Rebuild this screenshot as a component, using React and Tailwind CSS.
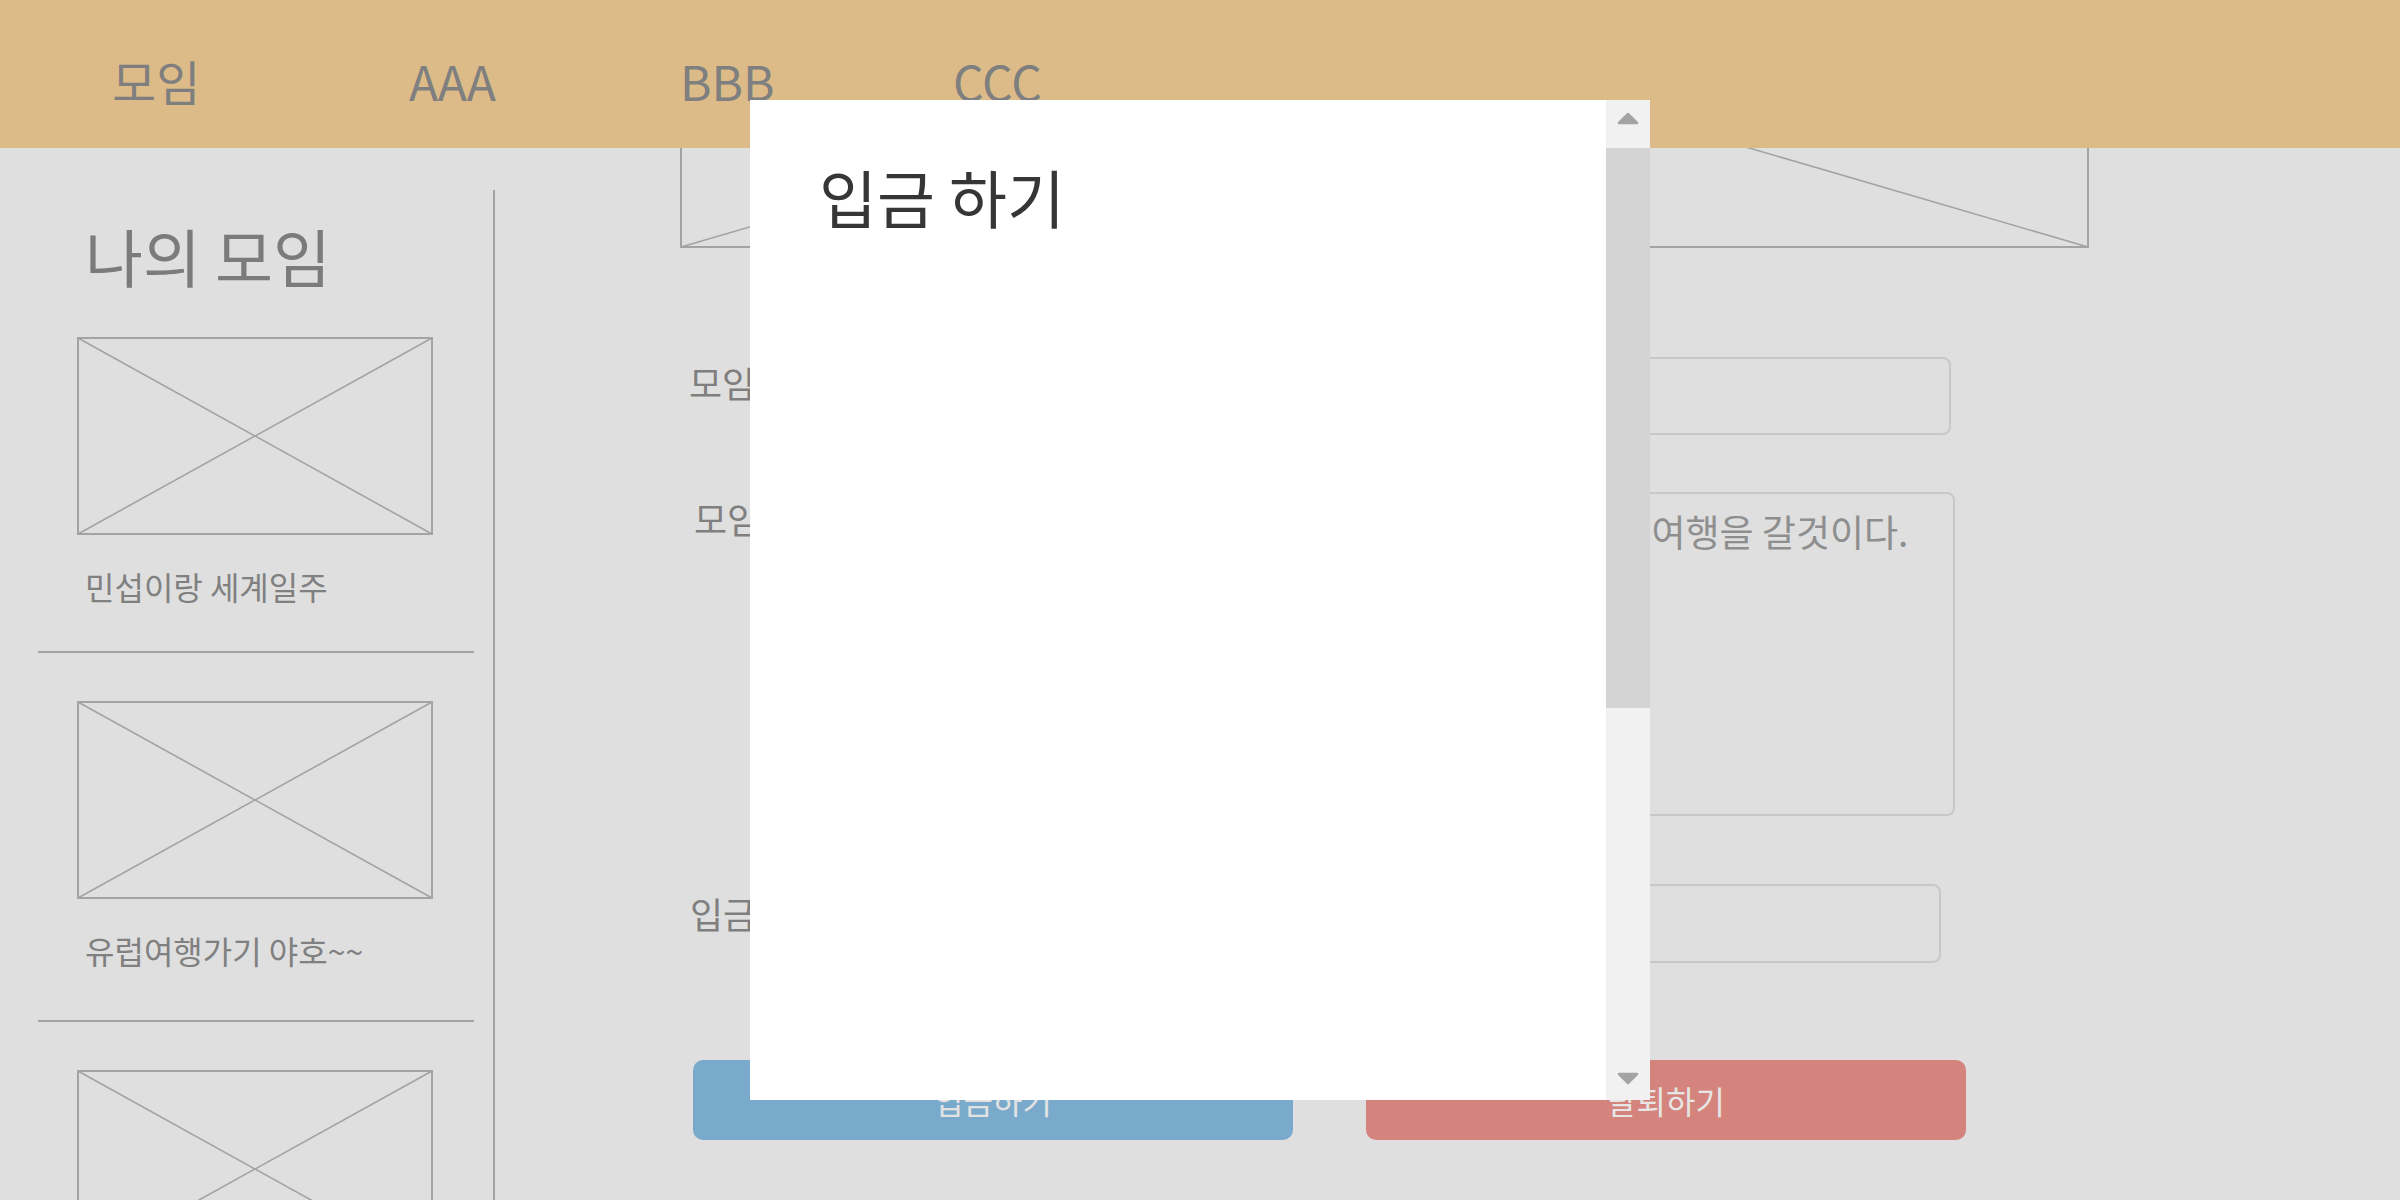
import React from "react";

function Placeholder({ w, h, className = "" }) {
  return (
    <svg
      width={w}
      height={h}
      viewBox={`0 0 ${w} ${h}`}
      className={`block shrink-0 ${className}`}
    >
      <rect x="1" y="1" width={w - 2} height={h - 2} fill="none" stroke="#a3a3a3" strokeWidth="2" />
      <line x1="1" y1="1" x2={w - 1} y2={h - 1} stroke="#a3a3a3" strokeWidth="1.6" />
      <line x1="1" y1={h - 1} x2={w - 1} y2="1" stroke="#a3a3a3" strokeWidth="1.6" />
    </svg>
  );
}

const cards = [
  { title: "민섭이랑 세계일주", gap: "mt-[49px]" },
  { title: "유럽여행가기 야호~~", gap: "mt-[54px]" },
];

function Card({ title, gap }) {
  return (
    <div className="flex flex-col">
      <Placeholder w={356} h={198} className="ml-[39px]" />
      <div className="ml-[47px] mt-[35px] text-[32px] leading-none text-[#808080] whitespace-nowrap">
        {title}
      </div>
      <div className={`${gap} h-[2px] bg-[#a3a3a3]`} />
      <div className="h-[48px]" />
    </div>
  );
}

function Arrow({ down }) {
  return (
    <svg width="22" height="13" viewBox="0 0 22 13">
      {down ? (
        <polygon points="2,2 20,2 11,11" fill="#a3a3a3" stroke="#a3a3a3" strokeWidth="2.5" strokeLinejoin="round" />
      ) : (
        <polygon points="11,2 20,11 2,11" fill="#a3a3a3" stroke="#a3a3a3" strokeWidth="2.5" strokeLinejoin="round" />
      )}
    </svg>
  );
}

export default function App() {
  return (
    <div className="relative w-[2400px] h-[1200px] overflow-hidden bg-[#dfdfdf] font-['Noto_Sans_CJK_KR','Noto_Sans',sans-serif]">
      {/* Header */}
      <header className="h-[148px] bg-[#dcbb88] flex items-center pt-[12px] text-[48px] leading-none text-[#7f7f7f]">
        <div className="ml-[112px] w-[297px]">모임</div>
        <div className="w-[271px]">AAA</div>
        <div className="w-[273px]">BBB</div>
        <div>CCC</div>
      </header>

      {/* Body */}
      <div className="flex h-[1052px]">
        <aside className="w-[495px] shrink-0 mt-[42px] border-r-2 border-[#a3a3a3] pl-[38px] pr-[19px] overflow-hidden">
          <h2 className="ml-[47px] mt-[33px] text-[63px] leading-none text-[#7b7b7b] font-normal whitespace-nowrap">
            나의 모임
          </h2>
          <div className="mt-[51px] flex flex-col">
            {cards.map((c) => (
              <Card key={c.title} title={c.title} gap={c.gap} />
            ))}
            <Placeholder w={356} h={198} className="ml-[39px]" />
          </div>
        </aside>

        <main className="flex-1 overflow-hidden">
          <div className="-mt-[313px] pl-[185px] flex flex-col">
            <Placeholder w={1409} h={413} />

            <div className="mt-[109px] flex items-start">
              <div className="w-[280px] pl-[9px] pt-[7px] text-[36px] leading-none text-[#7f7f7f] whitespace-nowrap">
                모임 이름
              </div>
              <input
                readOnly
                className="w-[991px] h-[78px] border-2 border-[#c8c8c8] rounded-[8px] bg-transparent outline-none px-[20px] text-[36px] text-[#8e8e8e]"
                defaultValue=""
              />
            </div>

            <div className="mt-[57px] flex items-start">
              <div className="w-[280px] pl-[14px] pt-[8px] text-[36px] leading-none text-[#7f7f7f] whitespace-nowrap">
                모임 소개
              </div>
              <textarea
                readOnly
                className="w-[995px] h-[324px] border-2 border-[#c8c8c8] rounded-[8px] bg-transparent outline-none resize-none overflow-hidden pl-[27px] pr-[8px] pt-[19px] text-[37px] leading-none text-[#8e8e8e]"
                defaultValue="우리는 이번 여름방학에 민섭이랑 함께 세계 여행을 갈것이다."
              />
            </div>

            <div className="mt-[68px] flex items-start">
              <div className="w-[280px] pl-[10px] pt-[11px] text-[36px] leading-none text-[#7f7f7f] whitespace-nowrap">
                입금 금액
              </div>
              <input
                readOnly
                className="w-[981px] h-[79px] border-2 border-[#c8c8c8] rounded-[8px] bg-transparent outline-none px-[20px] text-[36px] text-[#8e8e8e]"
                defaultValue=""
              />
            </div>

            <div className="mt-[97px] ml-[13px] flex gap-[73px]">
              <button className="w-[600px] h-[80px] rounded-[10px] bg-[#79aacb] text-[32px] leading-none text-[#e2e2e2]">
                입금하기
              </button>
              <button className="w-[600px] h-[80px] rounded-[10px] bg-[#d4847c] text-[32px] leading-none text-[#e6e6e6]">
                탈퇴하기
              </button>
            </div>
          </div>
        </main>
      </div>

      {/* Modal */}
      <div className="absolute left-[750px] top-[100px] w-[900px] h-[1000px] flex bg-white">
        <div className="flex-1 pl-[69px] pt-[64px]">
          <h3 className="text-[63px] leading-none text-[#363636] font-normal whitespace-nowrap">입금 하기</h3>
        </div>
        <div className="w-[44px] flex flex-col bg-[#f1f1f1]">
          <div className="h-[48px] flex justify-center pt-[12px]">
            <Arrow />
          </div>
          <div className="h-[560px] bg-[#d4d4d4]" />
          <div className="flex-1" />
          <div className="h-[48px] flex justify-center pt-[20px]">
            <Arrow down />
          </div>
        </div>
      </div>
    </div>
  );
}
